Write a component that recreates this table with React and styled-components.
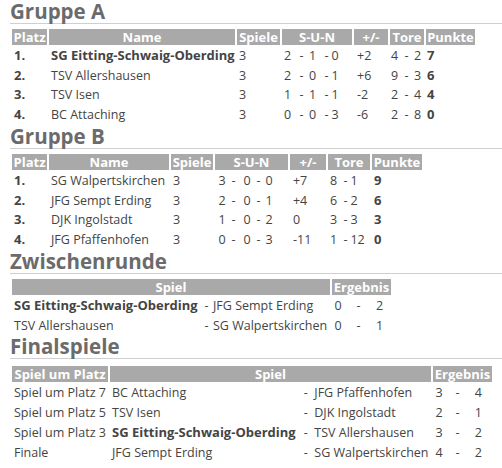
import React from "react";
import styled, { createGlobalStyle } from "styled-components";

const Global = createGlobalStyle`
  html, body { margin: 0; padding: 0; background: #fff; }
  body { font-family: "Open Sans", "DejaVu Sans", sans-serif; color: #444; }
`;

const Page = styled.div`
  padding: 0 0 0 10px;
`;

const Heading = styled.h2`
  margin: 0;
  font-size: 20.5px;
  font-weight: 700;
  line-height: 23px;
  color: #6b6b6b;
  border-bottom: 1px solid #cfcfcf;
`;

const Grid = styled.div`
  display: grid;
  grid-template-columns: ${(p) => p.$cols};
  grid-auto-rows: 17.7px;
  grid-template-rows: 16px;
  gap: 2px;
  margin: ${(p) => p.$top || 5}px 0 1.2px 2px;
`;

const Th = styled.div`
  grid-column: span ${(p) => p.$span || 1};
  background: #a9a9a9;
  color: #fff;
  font-weight: 700;
  font-size: 13px;
  line-height: 16px;
  text-align: center;
  white-space: nowrap;
  overflow: hidden;
`;

const Td = styled.div`
  padding-left: ${(p) => (p.$pl === undefined ? 2 : p.$pl)}px;
  line-height: 17.7px;
  white-space: nowrap;
  font-size: ${(p) => (p.$bold ? 13 : 12.5)}px;
  font-weight: ${(p) => (p.$bold ? 700 : 400)};
  color: #444;
`;

const groupA = [
  ["1.", "SG Eitting-Schwaig-Oberding", true, "3", ["2", "1", "0"], "+2", ["4", "2"], "7"],
  ["2.", "TSV Allershausen", false, "3", ["2", "0", "1"], "+6", ["9", "3"], "6"],
  ["3.", "TSV Isen", false, "3", ["1", "1", "1"], "-2", ["2", "4"], "4"],
  ["4.", "BC Attaching", false, "3", ["0", "0", "3"], "-6", ["2", "8"], "0"],
];

const groupB = [
  ["1.", "SG Walpertskirchen", false, "3", ["3", "0", "0"], "+7", ["8", "1"], "9"],
  ["2.", "JFG Sempt Erding", false, "3", ["2", "0", "1"], "+4", ["6", "2"], "6"],
  ["3.", "DJK Ingolstadt", false, "3", ["1", "0", "2"], "0", ["3", "3"], "3"],
  ["4.", "JFG Pfaffenhofen", false, "3", ["0", "0", "3"], "-11", ["1", "12"], "0"],
];

const zwischen = [
  ["SG Eitting-Schwaig-Oberding", true, "JFG Sempt Erding", "0", "2"],
  ["TSV Allershausen", false, "SG Walpertskirchen", "0", "1"],
];

const finals = [
  ["Spiel um Platz 7", "BC Attaching", false, "JFG Pfaffenhofen", "3", "4"],
  ["Spiel um Platz 5", "TSV Isen", false, "DJK Ingolstadt", "2", "1"],
  ["Spiel um Platz 3", "SG Eitting-Schwaig-Oberding", true, "TSV Allershausen", "3", "2"],
  ["Finale", "JFG Sempt Erding", false, "SG Walpertskirchen", "4", "2"],
];

/* layout of each group table: column widths and left paddings of the cells */
const layoutA = {
  cols: "35px 186px 43px 15.5px 7.5px 13.5px 4.9px 20.6px 34px 12.5px 7.5px 10px 49px",
  pad: { sun1: 2, pm: 3, tore1: 1, pkt: 1 },
};
const layoutB = {
  cols: "35px 120px 42px 14.5px 9.9px 11.1px 6.9px 22.6px 36px 13.5px 5px 19.5px 50px",
  pad: { sun1: 3.5, pm: 3, tore1: 2, pkt: 2 },
};

function Group({ title, rows, layout }) {
  const { pad } = layout;
  return (
    <>
      <Heading>{title}</Heading>
      <Grid $cols={layout.cols}>
        <Th>Platz</Th>
        <Th>Name</Th>
        <Th>Spiele</Th>
        <Th $span={5}>S-U-N</Th>
        <Th>+/-</Th>
        <Th $span={3}>Tore</Th>
        <Th>Punkte</Th>
        {rows.map((r) => (
          <React.Fragment key={r[0]}>
            <Td $bold>{r[0]}</Td>
            <Td $bold={r[2]}>{r[1]}</Td>
            <Td>{r[3]}</Td>
            <Td $pl={pad.sun1}>{r[4][0]}</Td>
            <Td $pl={0}>-</Td>
            <Td $pl={0}>{r[4][1]}</Td>
            <Td $pl={0}>-</Td>
            <Td $pl={0}>{r[4][2]}</Td>
            <Td $pl={pad.pm}>{r[5]}</Td>
            <Td $pl={pad.tore1}>{r[6][0]}</Td>
            <Td $pl={0}>-</Td>
            <Td $pl={0}>{r[6][1]}</Td>
            <Td $pl={pad.pkt} $bold>
              {r[7]}
            </Td>
          </React.Fragment>
        ))}
      </Grid>
    </>
  );
}

export default function App() {
  return (
    <Page>
      <Global />
      <Group title="Gruppe A" rows={groupA} layout={layoutA} />
      <Group title="Gruppe B" rows={groupB} layout={layoutB} />

      <Heading>Zwischenrunde</Heading>
      <Grid $cols="190.5px 6.5px 117px 22.5px 17.5px 15px">
        <Th $span={3}>Spiel</Th>
        <Th $span={3}>Ergebnis</Th>
        {zwischen.map((r) => (
          <React.Fragment key={r[0]}>
            <Td $bold={r[1]}>{r[0]}</Td>
            <Td $pl={0}>-</Td>
            <Td $pl={0}>{r[2]}</Td>
            <Td $pl={2.5}>{r[3]}</Td>
            <Td $pl={0}>-</Td>
            <Td $pl={0}>{r[4]}</Td>
          </React.Fragment>
        ))}
      </Grid>

      <Heading>Finalspiele</Heading>
      <Grid $top={7} $cols="96px 191.8px 8.5px 116.7px 20.5px 17.3px 17.2px">
        <Th>Spiel um Platz</Th>
        <Th $span={3}>Spiel</Th>
        <Th $span={3}>Ergebnis</Th>
        {finals.map((r) => (
          <React.Fragment key={r[0]}>
            <Td>{r[0]}</Td>
            <Td $bold={r[2]}>{r[1]}</Td>
            <Td $pl={0}>-</Td>
            <Td $pl={0}>{r[3]}</Td>
            <Td $pl={2.5}>{r[4]}</Td>
            <Td $pl={0}>-</Td>
            <Td $pl={0}>{r[5]}</Td>
          </React.Fragment>
        ))}
      </Grid>
    </Page>
  );
}
